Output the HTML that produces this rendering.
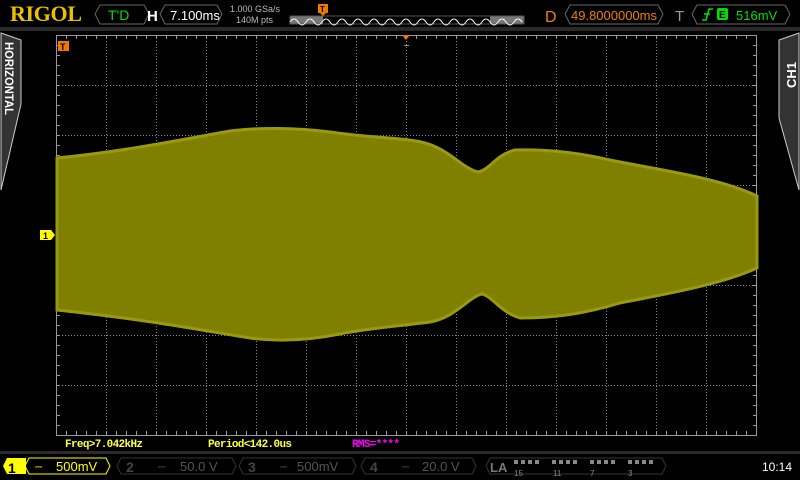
<!DOCTYPE html>
<html><head><meta charset="utf-8"><style>
html,body{margin:0;padding:0;background:#000;width:800px;height:480px;overflow:hidden;font-family:"Liberation Sans",sans-serif}
svg{position:absolute;left:0;top:0}
</style></head><body>
<svg width="800" height="480" xmlns="http://www.w3.org/2000/svg">
<defs>
<pattern id="tx" x="56" y="35" width="10" height="400" patternUnits="userSpaceOnUse"><line x1="0.5" y1="0" x2="0.5" y2="4" stroke="#999" /><line x1="0.5" y1="396" x2="0.5" y2="400" stroke="#999"/></pattern>
<pattern id="ty" x="56" y="35" width="701" height="10" patternUnits="userSpaceOnUse"><line x1="0" y1="0.5" x2="4" y2="0.5" stroke="#999"/><line x1="697" y1="0.5" x2="701" y2="0.5" stroke="#999"/></pattern>
</defs>
<rect x="0" y="27" width="800" height="4" fill="#2a2a2a"/>
<rect x="0" y="451" width="800" height="3" fill="#2a2a2a"/>
<text x="10" y="21" font-family="Liberation Serif" font-weight="bold" font-size="22" fill="#e8c000" textLength="72">RIGOL</text>
<path d="M100 5 L144 5 L149 14 L144 24 L100 24 L95 14Z" fill="none" stroke="#666"/>
<text x="108" y="20" font-size="14" fill="#00e000">T'D</text>
<text x="147" y="21" font-size="15" font-weight="bold" fill="#fff">H</text>
<path d="M165 5 L217 5 L222 14 L217 24 L165 24 L160 14Z" fill="none" stroke="#666"/>
<text x="170" y="20" font-size="13" fill="#fff">7.100ms</text>
<text x="230" y="12" font-size="9" fill="#bbb">1.000 GSa/s</text>
<text x="236" y="23" font-size="9" fill="#bbb">140M pts</text>
<rect x="290" y="16" width="33" height="8" fill="#777"/>
<rect x="490" y="16" width="34" height="8" fill="#777"/>
<rect x="290" y="16" width="234" height="8" fill="none" stroke="#555"/>
<path d="M290 22 q4 -6 8 0 t8 0 t8 0 t8 0 t8 0 t8 0 t8 0 t8 0 t8 0 t8 0 t8 0 t8 0 t8 0 t8 0 t8 0 t8 0 t8 0 t8 0 t8 0 t8 0 t8 0 t8 0 t8 0 t8 0 t8 0 t8 0 t8 0 t8 0 t8 0" fill="none" stroke="#fff" stroke-width="1"/>
<rect x="318" y="4" width="10" height="9" fill="#f07800"/><path d="M320 13 L326 13 L323 16Z" fill="#f07800"/>
<text x="320" y="12" font-size="8" font-weight="bold" fill="#000">T</text>
<text x="545" y="22" font-size="16" fill="#f08000">D</text>
<path d="M570 5 L658 5 L663 14 L658 24 L570 24 L565 14Z" fill="none" stroke="#666"/>
<text x="571" y="20" font-size="13" fill="#f08000">49.8000000ms</text>
<text x="675" y="21" font-size="15" fill="#999">T</text>
<path d="M697 5 L785 5 L790 14 L785 24 L697 24 L692 14Z" fill="none" stroke="#666"/>
<path d="M702 20 L706 20 L709 9 L713 9 M704 14 L710 14" fill="none" stroke="#00e000" stroke-width="1.5"/>
<rect x="717" y="8" width="11" height="12" rx="2" fill="#00e000"/>
<text x="719" y="18" font-size="10" font-weight="bold" fill="#000">E</text>
<text x="736" y="20" font-size="13" fill="#00e000">516mV</text>
<path d="M1 33 L21 40 L21 104 L1 190Z" fill="#333" stroke="#ccc" stroke-width="1"/>
<text transform="translate(5,42) rotate(90)" font-size="12" font-weight="bold" fill="#fff" textLength="73" lengthAdjust="spacingAndGlyphs">HORIZONTAL</text>
<path d="M799 33 L779 40 L779 118 L799 190Z" fill="#333" stroke="#ccc" stroke-width="1"/>
<text transform="translate(796,88) rotate(-90)" font-size="13" font-weight="bold" fill="#fff">CH1</text>
<!-- grid -->
<g stroke="#888" stroke-dasharray="1 2" stroke-width="1">
<line x1="106.5" y1="35" x2="106.5" y2="435"/><line x1="156.5" y1="35" x2="156.5" y2="435"/><line x1="206.5" y1="35" x2="206.5" y2="435"/><line x1="256.5" y1="35" x2="256.5" y2="435"/><line x1="306.5" y1="35" x2="306.5" y2="435"/><line x1="356.5" y1="35" x2="356.5" y2="435"/><line x1="406.5" y1="35" x2="406.5" y2="435"/><line x1="456.5" y1="35" x2="456.5" y2="435"/><line x1="506.5" y1="35" x2="506.5" y2="435"/><line x1="556.5" y1="35" x2="556.5" y2="435"/><line x1="606.5" y1="35" x2="606.5" y2="435"/><line x1="656.5" y1="35" x2="656.5" y2="435"/><line x1="706.5" y1="35" x2="706.5" y2="435"/>
<line x1="56" y1="85.5" x2="757" y2="85.5"/><line x1="56" y1="135.5" x2="757" y2="135.5"/><line x1="56" y1="185.5" x2="757" y2="185.5"/><line x1="56" y1="235.5" x2="757" y2="235.5"/><line x1="56" y1="285.5" x2="757" y2="285.5"/><line x1="56" y1="335.5" x2="757" y2="335.5"/><line x1="56" y1="385.5" x2="757" y2="385.5"/>
</g>
<g stroke="#999"><line x1="404" y1="45.5" x2="409" y2="45.5"/></g>
<rect x="56" y="35" width="701" height="400" fill="url(#tx)"/>
<rect x="56" y="35" width="701" height="400" fill="url(#ty)"/>
<rect x="56.5" y="35.5" width="700" height="400" fill="none" stroke="#999"/>
<!-- waveform on top -->
<path d="M57 158 C120 152 180 140 230 131 C260 127 300 128 330 132 C370 138 410 138 425 143 C450 150 462 168 478 172 C490 170 495 155 515 150 C550 149 580 153 610 160 C660 170 720 178 757 196 L757 268 C720 285 660 295 620 303 C590 312 560 318 520 318 C500 312 492 296 482 294 C470 296 455 318 430 322 C400 326 370 328 340 334 C310 340 280 342 250 338 C200 330 150 320 57 310Z" fill="#808000" stroke="#9a9a10" stroke-width="3"/>
<rect x="58" y="41" width="11" height="10" fill="#f07800"/>
<text x="60" y="50" font-size="9" font-weight="bold" fill="#000">T</text>
<path d="M402 35 L410 35 L406 40Z" fill="#f07800"/>
<path d="M40 230 L51 230 L55 235 L51 240 L40 240Z" fill="#ffff00"/>
<text x="43" y="239" font-size="9" font-weight="bold" fill="#000">1</text>
<g font-family="Liberation Mono" font-size="11" font-weight="bold">
<text x="65" y="447" fill="#ffff40" textLength="78">Freq&gt;7.042kHz</text>
<text x="208" y="447" fill="#ffff40" textLength="84">Period&lt;142.0us</text>
<text x="352" y="447" fill="#ff00ff" textLength="48">RMS=****</text>
</g>
<path d="M3 466 L7 458 L26 458 L26 474 L7 474Z" fill="#ffff00"/>
<text x="8" y="473" font-size="14" font-weight="bold" fill="#000">1</text>
<path d="M29 458 L106 458 L110 466 L106 474 L29 474 L25 466Z" fill="none" stroke="#ffff00"/>
<text x="35" y="470" font-size="9" fill="#ffff00">⎓</text>
<text x="56" y="471" font-size="13" fill="#ffff00">500mV</text>
<g fill="#444"><text x="126" y="472" font-size="14" font-weight="bold">2</text><text x="248" y="472" font-size="14" font-weight="bold">3</text><text x="370" y="472" font-size="14" font-weight="bold">4</text></g>
<g fill="none" stroke="#333"><path d="M121 458 L232 458 L236 466 L232 474 L121 474 L117 466Z"/><path d="M243 458 L352 458 L356 466 L352 474 L243 474 L239 466Z"/><path d="M365 458 L472 458 L476 466 L472 474 L365 474 L361 466Z"/><path d="M490 458 L662 458 L666 466 L662 474 L490 474 L486 466Z"/></g>
<g font-size="13" fill="#555"><text x="180" y="471">50.0 V</text><text x="297" y="471">500mV</text><text x="422" y="471">20.0 V</text></g>
<g font-size="9" fill="#555"><text x="158" y="470">⎓</text><text x="280" y="470">⎓</text><text x="402" y="470">⎓</text></g>
<text x="490" y="472" font-size="13" font-weight="bold" fill="#777">LA</text>
<g fill="#888"><rect x="514" y="460" width="4" height="4"/><rect x="521" y="460" width="4" height="4"/><rect x="528" y="460" width="4" height="4"/><rect x="535" y="460" width="4" height="4"/><rect x="552" y="460" width="4" height="4"/><rect x="559" y="460" width="4" height="4"/><rect x="566" y="460" width="4" height="4"/><rect x="573" y="460" width="4" height="4"/><rect x="590" y="460" width="4" height="4"/><rect x="597" y="460" width="4" height="4"/><rect x="604" y="460" width="4" height="4"/><rect x="611" y="460" width="4" height="4"/><rect x="628" y="460" width="4" height="4"/><rect x="635" y="460" width="4" height="4"/><rect x="642" y="460" width="4" height="4"/><rect x="649" y="460" width="4" height="4"/></g>
<g font-size="8" fill="#888"><text x="514" y="476">15</text><text x="553" y="476">11</text><text x="590" y="476">7</text><text x="628" y="476">3</text></g>
<text x="762" y="471" font-size="12" fill="#fff">10:14</text>
</svg>
</body></html>
